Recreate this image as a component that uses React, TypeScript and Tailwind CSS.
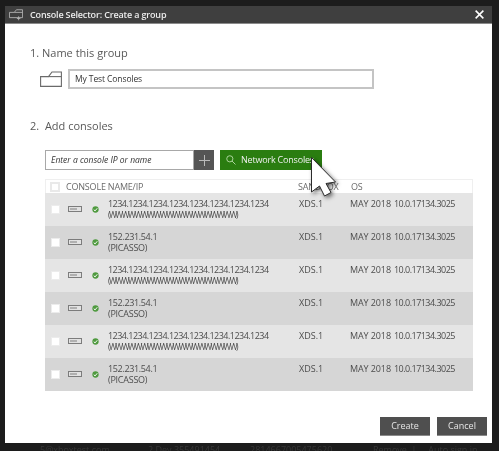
const rows = [
  { a: "1234.1234.1234.1234.1234.1234.1234.1234", b: "(WWWWWWWWWWWWWWWWWWWW)" },
  { a: "152.231.54.1", b: "(PICASSO)" },
  { a: "1234.1234.1234.1234.1234.1234.1234.1234", b: "(WWWWWWWWWWWWWWWWWWWW)" },
  { a: "152.231.54.1", b: "(PICASSO)" },
  { a: "1234.1234.1234.1234.1234.1234.1234.1234", b: "(WWWWWWWWWWWWWWWWWWWW)" },
  { a: "152.231.54.1", b: "(PICASSO)" },
];

function FolderIcon({ className, color }: { className: string; color: string }) {
  return (
    <svg viewBox="0 0 22 16" className={className} fill="none" stroke={color} strokeWidth="1.1">
      <path d="M0.6 5.6H8.5L12 1H21.4V15.4H0.6Z" />
      <path d="M8.5 5.6H21.4" />
    </svg>
  );
}

function Row({ a, b, odd }: { a: string; b: string; odd: boolean }) {
  const wide = a.length > 20;
  return (
    <div className={"flex h-[33px] items-start text-[#4d4d4d] " + (odd ? "bg-[#d6d6d6]" : "bg-[#e5e5e5]")}>
      <span className="mt-[12px] ml-[6px] block h-[9px] w-[9px] shrink-0 border border-[#ececec] bg-white" />
      <svg viewBox="0 0 14 6" className="mt-[13px] ml-[8px] h-[6px] w-[14px] shrink-0">
        <rect x="0.5" y="0.5" width="13" height="5" fill="#e2e2e2" stroke="#7c7c7c" />
        <rect x="2" y="2" width="7" height="2" fill="#b0b0b0" />
      </svg>
      <svg viewBox="0 0 8 8" className="mt-[13px] ml-[10px] h-[7px] w-[7px] shrink-0">
        <circle cx="4" cy="4" r="3.6" fill="#4f9a3f" />
        <path d="M2 4.2L3.5 5.6L6 2.6" fill="none" stroke="#fff" strokeWidth="1.1" />
      </svg>
      <div className="mt-[6px] ml-[9px] w-[191px] text-[9px] leading-[10.5px]">
        <div className={wide ? "tracking-[-0.53px]" : "tracking-[-0.35px]"}>{a}</div>
        <div className={wide ? "text-[8.5px] tracking-[-1.5px]" : "tracking-[-0.25px]"}>{b}</div>
      </div>
      <div className="mt-[6px] w-[51px] text-[9px] leading-[10.5px]">XDS.1</div>
      <div className="mt-[6px] w-[44px] text-[9px] leading-[10.5px] tracking-[-0.1px] whitespace-nowrap">MAY 2018</div>
      <div className="mt-[6px] text-[9px] leading-[10.5px] tracking-[-0.53px] whitespace-nowrap">10.0.17134.3025</div>
    </div>
  );
}

export default function App() {
  return (
    <div className="relative h-[451px] w-[499px] overflow-hidden bg-[#1c1c1c] font-['Open_Sans',sans-serif] blur-[0.3px]">
      <div className="flex h-full flex-col justify-end pl-[40px] text-[9px] leading-[9px] text-[#363636]">
        <div className="-mb-[3px] flex whitespace-nowrap">
          <span className="w-[108px]">5@xboxtest.com</span>
          <span className="w-[102px]">2 Dev 355491454</span>
          <span className="w-[123px]">2814667005475620</span>
          <span>Remove&nbsp;&nbsp;|&nbsp;&nbsp;&nbsp;&nbsp;&nbsp;Auto sign in</span>
        </div>
      </div>
      <div className="absolute top-[6px] left-[5px] flex h-[437px] w-[487px] flex-col bg-white">
        <div className="flex h-[18px] shrink-0 items-center border-b border-[#8a8a8a] bg-[#3f3f3f] pl-[4px] text-white">
          <svg viewBox="0 0 16 13" className="h-[12px] w-[14px]" fill="none" stroke="#b5b5b5" strokeWidth="1">
            <path d="M0.5 3.5H6L8.5 0.5H15.5V9.5H0.5Z" />
            <path d="M6 3.5H15.5M11 8V12.5M9 10.5H13" />
          </svg>
          <span className="ml-[7px] text-[9px] font-semibold tracking-[-0.15px] text-[#ececec]">Console Selector: Create a group</span>
          <svg viewBox="0 0 10 10" className="mr-[8px] ml-auto h-[9px] w-[9px]" stroke="#fff" strokeWidth="1.7">
            <path d="M0.7 0.7L9.3 9.3M9.3 0.7L0.7 9.3" />
          </svg>
        </div>

        <div className="flex min-h-0 flex-1 flex-col">
          <div className="mt-[20px] ml-[25px] text-[11px] leading-[17px] text-[#595959]">1. Name this group</div>
          <div className="mt-[8px] ml-[35px] flex items-center">
            <FolderIcon className="h-[16px] w-[22px]" color="#6a6a6a" />
            <div className="ml-[6px] flex h-[20px] w-[306px] items-center border-2 border-[#c4c4c4] pl-[5px] text-[8.5px] tracking-[-0.1px] text-[#333]">My Test Consoles</div>
          </div>

          <div className="mt-[28px] ml-[25px] text-[11px] leading-[17px] text-[#595959]">2.&nbsp;&nbsp;Add consoles</div>

          <div className="mt-[16px] ml-[40px] flex">
            <div className="flex h-[20px] w-[149px] items-center border border-[#a8a8a8] bg-white pl-[5px] text-[8.5px] italic text-[#333]">Enter a console IP or name</div>
            <div className="flex h-[20px] w-[20px] items-center justify-center bg-[#555555]">
              <svg viewBox="0 0 11 11" className="h-[11px] w-[11px]" stroke="#b9b9b9" strokeWidth="1">
                <path d="M5.5 0V11M0 5.5H11" />
              </svg>
            </div>
            <div className="ml-[6px] flex h-[20px] w-[102px] items-center bg-[#2a7d10] pl-[6px] text-[9px] text-[#f0f0f0]">
              <svg viewBox="0 0 11 11" className="h-[10px] w-[10px]" fill="none" stroke="#b6dca8" strokeWidth="1">
                <circle cx="4.2" cy="4.2" r="3.4" />
                <path d="M6.6 6.6L10.4 10.4" />
              </svg>
              <span className="ml-[5px] whitespace-nowrap tracking-[-0.2px]">Network Consoles</span>
            </div>
          </div>

          <div className="mt-[9px] ml-[40px] w-[428px]">
            <div className="flex h-[14px] items-center border border-b-0 border-[#efefef] bg-white text-[9px] leading-none tracking-[-0.2px] text-[#6b6b6b]">
              <span className="ml-[4px] block h-[10px] w-[10px] shrink-0 border-2 border-[#e9e9e9] bg-white" />
              <span className="ml-[6px] w-[232px]">CONSOLE NAME/IP</span>
              <span className="w-[53px]">SANDBOX</span>
              <span>OS</span>
            </div>
            {rows.map((r, i) => (
              <Row key={i} a={r.a} b={r.b} odd={i % 2 === 1} />
            ))}
          </div>

          <div className="mt-auto mr-[5px] mb-[7px] flex justify-end gap-[7px]">
            <div className="flex h-[19px] w-[50px] items-center justify-center border-b border-[#8a8a8a] bg-[#4f4f4f] text-[9px] text-[#e6e6e6]">Create</div>
            <div className="flex h-[19px] w-[50px] items-center justify-center border-b border-[#8a8a8a] bg-[#4f4f4f] text-[9px] text-[#e6e6e6]">Cancel</div>
          </div>
        </div>
      </div>

      <svg viewBox="0 0 30 44" className="absolute top-[155px] left-[309px] h-[44px] w-[30px] drop-shadow-[2px_2px_2px_rgba(0,0,0,0.55)]">
        <path d="M2.5 2.5V37L10.5 31L15.5 41L22 37.5L17 28.5L26.5 27Z" fill="#fff" stroke="#2b2b2b" strokeWidth="1" />
      </svg>
    </div>
  );
}
